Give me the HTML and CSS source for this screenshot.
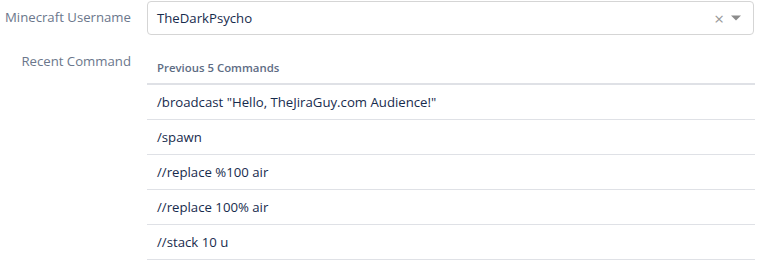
FILE: index.html
```html
<!DOCTYPE html>
<html lang="en">
<head>
    <meta charset="UTF-8">
    <meta name="viewport" content="width=device-width, initial-scale=1.0">
    <title>Minecraft Command</title>
    <link rel="stylesheet" href="styles.css">
</head>
<body>
    <div class="form">
        <div class="field">
            <label class="field-label">Minecraft Username</label>
            <div class="select">
                <span class="select-value">TheDarkPsycho</span>
                <span class="select-clear">&times;</span>
                <svg class="select-arrow" width="12" height="8" viewBox="0 0 12 8">
                    <path d="M1 1.5h10L6 6.5z" fill="#8c8c8c"/>
                </svg>
            </div>
        </div>
        <div class="field">
            <label class="field-label field-label-low">Recent Command</label>
            <table class="commands">
                <thead>
                    <tr><th>Previous 5 Commands</th></tr>
                </thead>
                <tbody>
                    <tr><td>/broadcast "Hello, TheJiraGuy.com Audience!"</td></tr>
                    <tr><td>/spawn</td></tr>
                    <tr><td>//replace %100 air</td></tr>
                    <tr><td>//replace 100% air</td></tr>
                    <tr><td>//stack 10 u</td></tr>
                </tbody>
            </table>
        </div>
    </div>
</body>
</html>
```

FILE: styles.css
```css
body {
    font-family: "Open Sans", "Noto Sans", Arial, sans-serif;
    font-size: 13.2px;
    margin: 0;
    padding: 0;
    background: #fff;
    color: #172b4d;
}
.form {
    padding-top: 1px;
    width: 755px;
}
.field {
    display: grid;
    grid-template-columns: 131px 1fr;
    column-gap: 16px;
    margin-bottom: 16px;
}
.field-label {
    text-align: right;
    white-space: nowrap;
    color: #6b778c;
    padding-top: 6px;
    line-height: 20px;
}
.field-label-low {
    padding-top: 0;
}
.select {
    display: flex;
    align-items: center;
    height: 34px;
    margin-right: 1px;
    border: 1px solid #d5d5d5;
    border-radius: 4px;
    padding: 0 11px 0 9px;
    box-sizing: border-box;
}
.select-value {
    flex: 1;
    color: #172b4d;
}
.select-clear {
    color: #999;
    font-size: 17px;
    margin-right: 6px;
}
.commands {
    width: 100%;
    border-collapse: collapse;
}
.commands th {
    text-align: left;
    font-size: 11.4px;
    font-weight: 600;
    color: #5e6c84;
    padding: 8px 10px 7px;
    line-height: 17px;
    border-bottom: 2px solid #dfe1e6;
}
.commands td {
    padding: 7px 10px;
    line-height: 20px;
    border-bottom: 1px solid #dfe1e6;
}
```
